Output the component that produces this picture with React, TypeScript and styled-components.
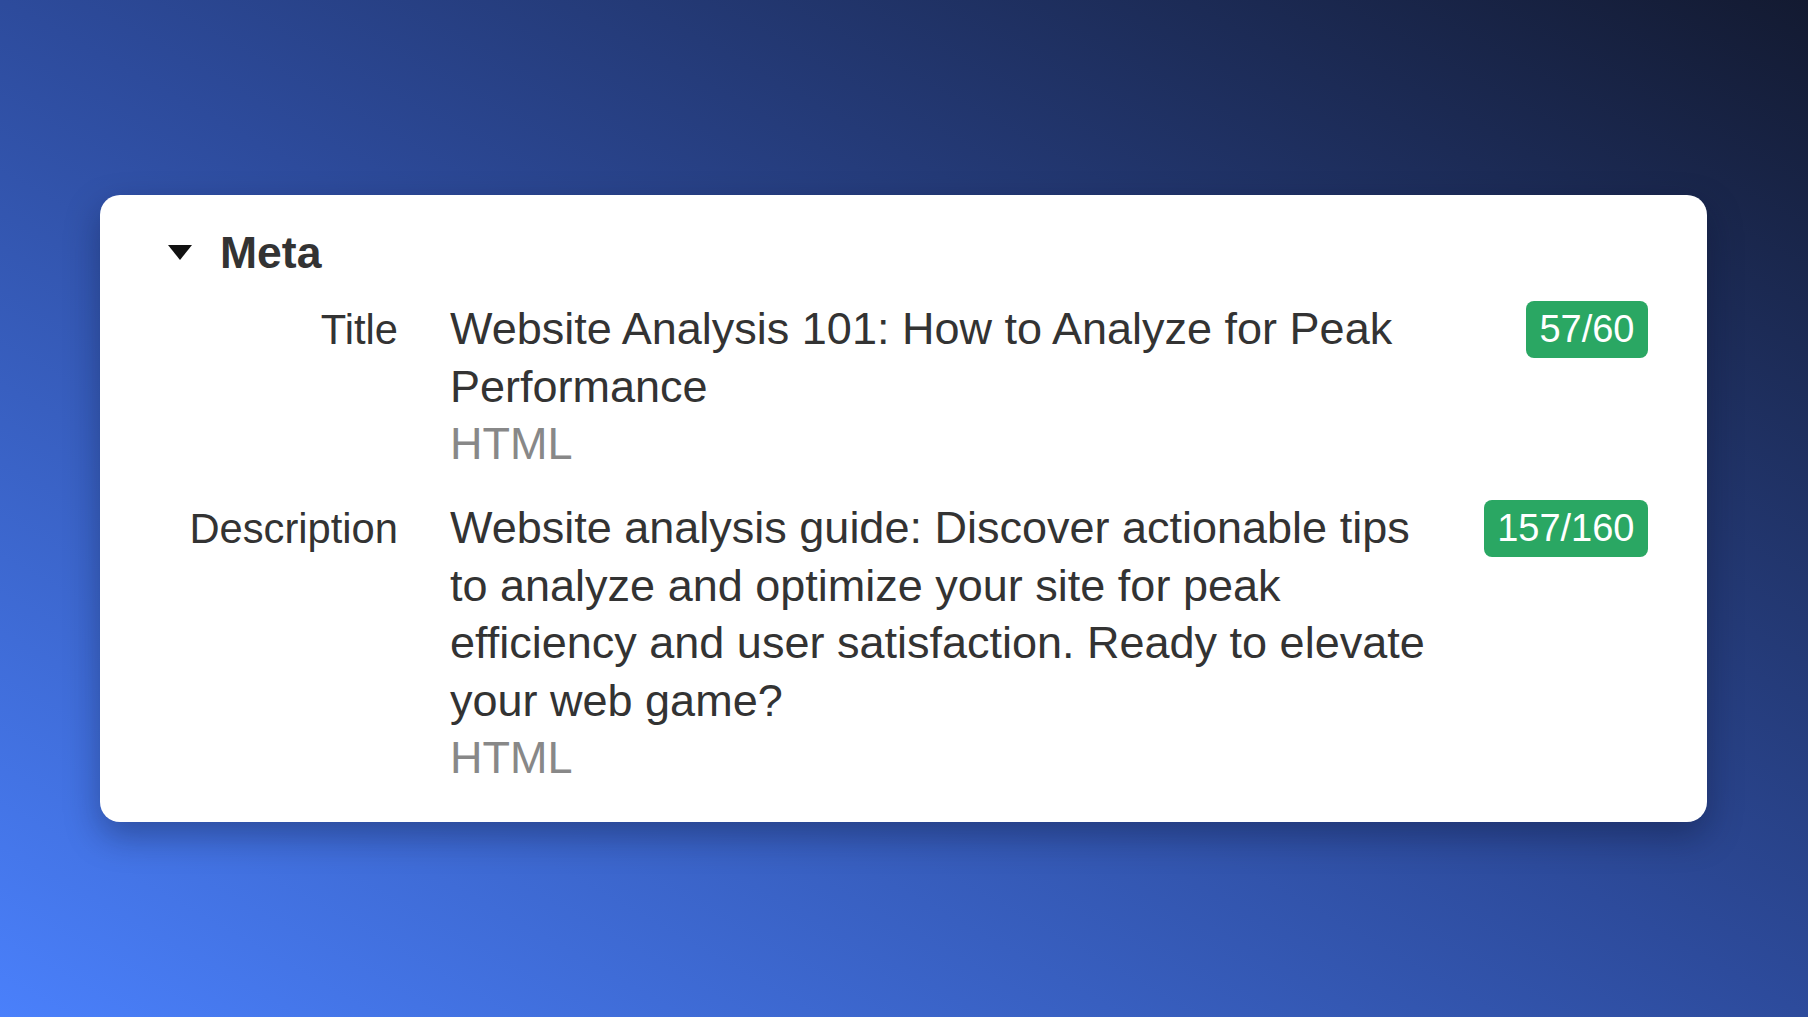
import styled, { createGlobalStyle } from "styled-components"

const GlobalStyle = createGlobalStyle`
    * { box-sizing: border-box; }
    html, body { margin: 0; padding: 0; }
    body {
        font-family: "Liberation Sans", Arial, Helvetica, sans-serif;
        color: #333;
    }
`

const Page = styled.div`
    width: 100vw;
    height: 100vh;
    overflow: hidden;
    background: linear-gradient(to top right, #4a80fb 0%, #2d4b9c 50%, #131a31 100%);
    padding: 195px 101px 0 100px;
`

const Card = styled.section`
    background: #fff;
    border-radius: 20px;
    box-shadow: 0 14px 34px rgba(8, 14, 40, 0.35);
    padding: 29px 59px 35px 68px;
`

const Heading = styled.div`
    display: flex;
    align-items: center;
    gap: 28px;
    font-size: 44.5px;
    font-weight: 700;
    line-height: 57.5px;
    color: #333;
`

const Caret = styled.span`
    display: block;
    width: 0;
    height: 0;
    border-left: 12.5px solid transparent;
    border-right: 12.5px solid transparent;
    border-top: 15px solid #111;
`

const Rows = styled.div`
    display: flex;
    flex-direction: column;
    gap: 26.5px;
    margin-top: 18.5px;
    padding-left: 21px;
`

const Row = styled.div`
    display: flex;
    align-items: flex-start;
`

const Label = styled.div`
    flex: 0 0 209px;
    text-align: right;
    font-size: 41.7px;
    line-height: 57.5px;
    padding-top: 1px;
    color: #333;
`

const Content = styled.div`
    flex: 1;
    margin-left: 52px;
    font-size: 45px;
    line-height: 57.5px;
    color: #333;
`

const Source = styled.div`
    color: #888;
`

const Badge = styled.span`
    flex: none;
    margin-left: 40px;
    margin-top: 1px;
    height: 57px;
    line-height: 57px;
    padding: 0 13.5px;
    border-radius: 8px;
    background: #2aa763;
    color: #fff;
    font-size: 38px;
`

const fields = [
    {
        label: "Title",
        value: "Website Analysis 101: How to Analyze for Peak Performance",
        count: "57/60",
    },
    {
        label: "Description",
        value: "Website analysis guide: Discover actionable tips to analyze and optimize your site for peak efficiency and user satisfaction. Ready to elevate your web game?",
        count: "157/160",
    },
]

export default function App() {
    return (
        <>
            <GlobalStyle />
            <Page>
                <Card>
                    <Heading>
                        <Caret />
                        <span>Meta</span>
                    </Heading>
                    <Rows>
                        {fields.map((field) => (
                            <Row key={field.label}>
                                <Label>{field.label}</Label>
                                <Content>
                                    <div>{field.value}</div>
                                    <Source>HTML</Source>
                                </Content>
                                <Badge>{field.count}</Badge>
                            </Row>
                        ))}
                    </Rows>
                </Card>
            </Page>
        </>
    )
}
